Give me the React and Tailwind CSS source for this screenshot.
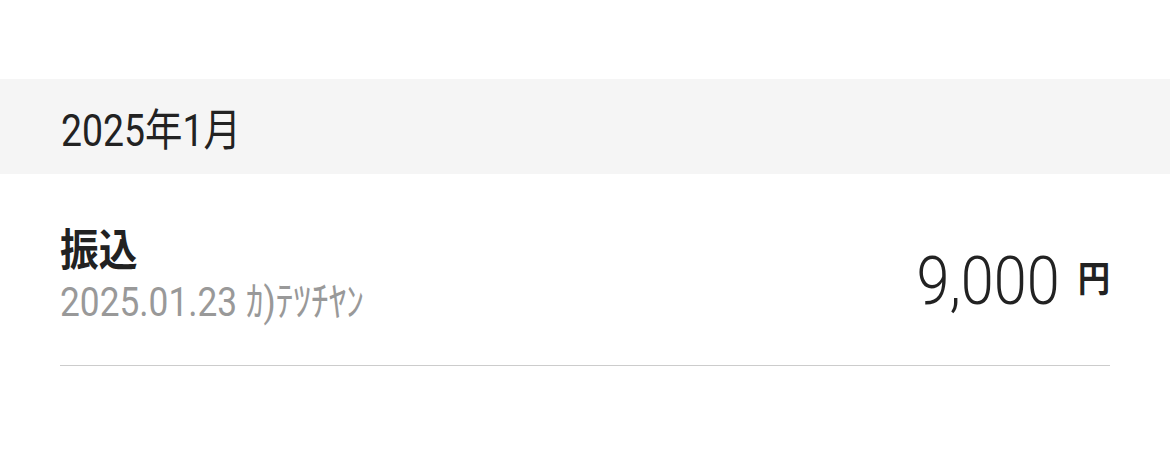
import React from "react";

function Transaction({ title, date, payee, amount }) {
  return (
    <div className="mx-[60px] h-[192px] flex items-start justify-between border-b border-[#cccccc]">
      <div className="flex flex-col pt-[51px]">
        <p className="text-[44px] leading-[52px] font-bold text-[#222222] origin-left scale-x-[0.88]">
          {title}
        </p>
        <p className="text-[41px] leading-[50px] text-[#999999] origin-left scale-x-[0.86] whitespace-nowrap">
          {date} {payee}
        </p>
      </div>
      <div className="flex items-start gap-5 pt-[75px] origin-right scale-x-[0.9]">
        <span className="text-[66px] leading-none font-light text-[#222222]">{amount}</span>
        <span className="text-[36px] leading-none font-bold text-[#222222] mt-[13px]">円</span>
      </div>
    </div>
  );
}

export default function App() {
  return (
    <div
      className="w-[1170px] h-[474px] bg-white overflow-hidden"
      style={{ fontFamily: "Roboto, 'Noto Sans CJK JP', sans-serif" }}
    >
      <div className="h-[79px]"></div>
      <div className="h-[95px] bg-[#f5f5f5] flex items-center px-[61px] pt-[8px]">
        <p className="text-[44px] text-[#222222] origin-left scale-x-[0.85]">2025年1月</p>
      </div>
      <Transaction title="振込" date="2025.01.23" payee="ｶ)ﾃﾂﾁﾔﾝ" amount="9,000" />
    </div>
  );
}
